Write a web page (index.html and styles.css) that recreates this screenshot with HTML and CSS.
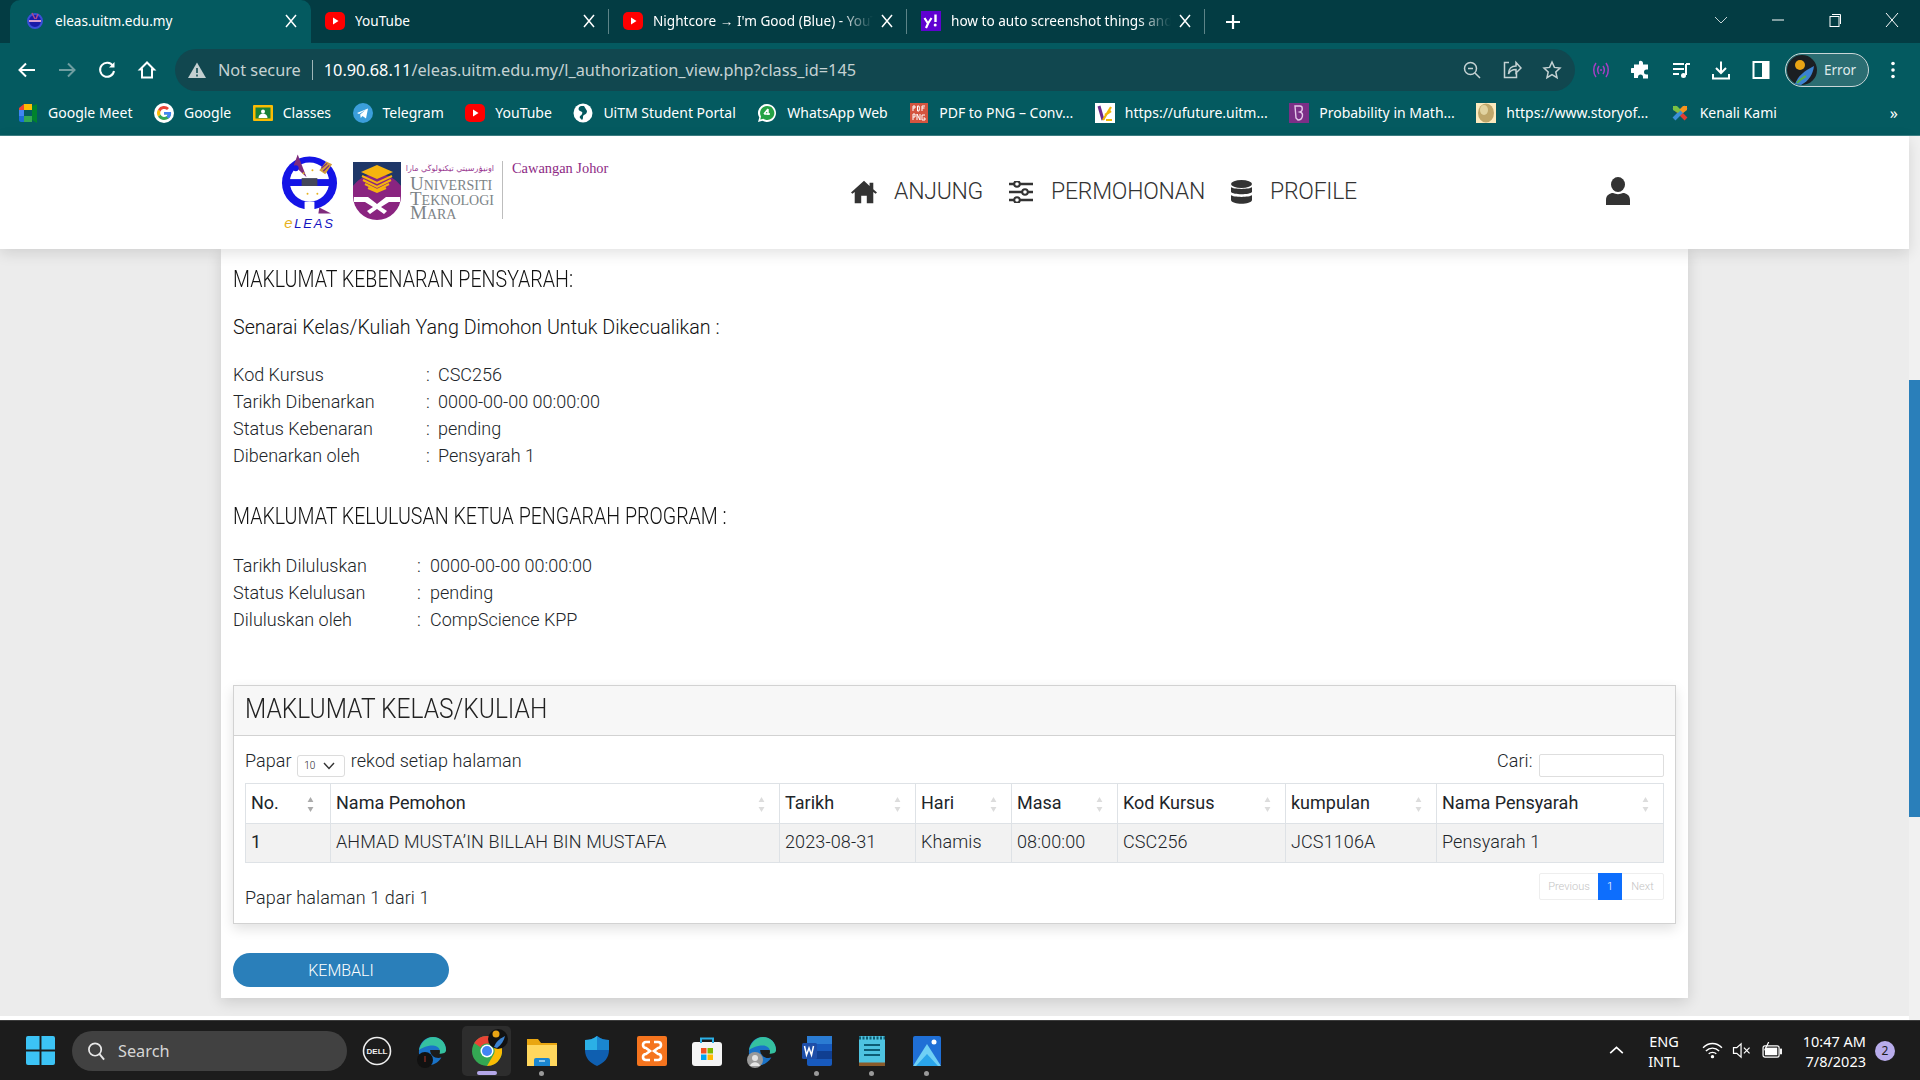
FILE: index.html
```html
<!DOCTYPE html>
<html>
  <head>
    <title>eLEAS - Maklumat Kebenaran</title>
    <link rel="stylesheet" href="styles.css">
  </head>
  <body>
    <svg class="defs" width="0" height="0">
      <symbol id="yt" viewBox="0 0 20 20"><rect y="1" width="20" height="18" rx="5" fill="#f00"/><path d="M8 6.500l5.500 3.500L8 13.500z" fill="#fff"/></symbol>
      <symbol id="x" viewBox="0 0 12 14"><path d="M1 1l10 12M11 1L1 13" stroke="#fff" stroke-width="1.500" fill="none"/></symbol>
      <symbol id="edge" viewBox="0 0 30 32"><path d="M1 17C1 7 8 1 16 1c8 0 14 6 14 14H13c0 6 6 10 12 8-3 5-8 8-12 8C6 31 1 25 1 17z" fill="#1a73c8"/><path d="M1 15C3 7 9 1 16 1c8 0 14 6 14 14 0 3-3 4-7 4 2-5-2-9-7-9-7 0-13 3-15 5z" fill="#35c1a0"/></symbol>
      <symbol id="sortarrows" viewBox="0 0 8 18"><path d="M4 0l3.500 6H.5z" fill="currentColor"/><path d="M4 18L.5 12h7z" fill="currentColor"/></symbol>
    </svg>

    <div id="tabstrip">
      <div class="tab active">
        <svg class="favicon" viewBox="0 0 20 20"><circle cx="10" cy="10" r="7" fill="#1a1aa8" stroke="#3a4fd8" stroke-width="2"/><path d="M4 9h12v2H4z" fill="#d9a0d0"/><path d="M7 2l3 6M13 3l-2 5" stroke="#b04a8a" stroke-width="1.500"/></svg>
        <span class="tabtitle">eleas.uitm.edu.my</span>
        <svg class="tabclose"><use href="#x"/></svg>
      </div>
      <div class="tab">
        <svg class="favicon"><use href="#yt"/></svg>
        <span class="tabtitle">YouTube</span>
        <svg class="tabclose"><use href="#x"/></svg>
      </div>
      <div class="tab">
        <svg class="favicon"><use href="#yt"/></svg>
        <span class="tabtitle fade">Nightcore → I'm Good (Blue) - YouTube</span>
        <svg class="tabclose"><use href="#x"/></svg>
      </div>
      <div class="tab">
        <svg class="favicon" viewBox="0 0 20 20"><rect width="20" height="20" fill="#5f01d1"/><path d="M3.500 7l3.500 5.500L5 17M10.500 7l-3.500 5.500" stroke="#fff" stroke-width="2.200" fill="none"/><path d="M14.500 3.500v7.500" stroke="#fff" stroke-width="2.400"/><circle cx="14.200" cy="14" r="1.500" fill="#fff"/></svg>
        <span class="tabtitle fade">how to auto screenshot things and save</span>
        <svg class="tabclose"><use href="#x"/></svg>
      </div>
      <svg class="newtab" viewBox="0 0 16 16"><path d="M8 1v14M1 8h14" stroke="#fff" stroke-width="2.200"/></svg>
      <div class="winctl">
        <svg class="winbtn" viewBox="0 0 14 14"><path d="M1 4l6 6 6-6" stroke="#c8d4d6" fill="none"/></svg>
        <svg class="winbtn" viewBox="0 0 14 14"><path d="M1 7h12" stroke="#fff"/></svg>
        <svg class="winbtn" viewBox="0 0 14 14"><rect x="2" y="3.500" width="9" height="10" fill="none" stroke="#fff"/><path d="M4 1.500h8.500V11" fill="none" stroke="#fff"/></svg>
        <svg class="winbtn" viewBox="0 0 14 14"><path d="M1 0l12 14M13 0L1 14" stroke="#fff" fill="none"/></svg>
      </div>
    </div>

    <div id="toolbar">
      <div class="tbtn"><svg viewBox="0 0 20 20"><path d="M18 10H3M9 3.500L2.500 10 9 16.500" stroke="#fff" stroke-width="2" fill="none"/></svg></div>
      <div class="tbtn"><svg viewBox="0 0 20 20"><path d="M2 10h15M11 3.500l6.500 6.500-6.500 6.500" stroke="#6f9ea1" stroke-width="2" fill="none"/></svg></div>
      <div class="tbtn"><svg viewBox="0 0 20 20"><path d="M16 6a7 7 0 1 0 1 5" stroke="#fff" stroke-width="2" fill="none"/><path d="M17.500 2v5.500H12z" fill="#fff"/></svg></div>
      <div class="tbtn"><svg viewBox="0 0 20 20"><path d="M10 2.500L3 9.500h2v8h10v-8h2z" stroke="#fff" stroke-width="2" fill="none"/></svg></div>
      <div id="omnibox">
        <svg class="warn" viewBox="0 0 20 20"><path d="M10 2.500L19 18H1z" fill="#c3cfd0"/><path d="M10 8v5M10 14.500v2" stroke="#0f4a52" stroke-width="1.600"/></svg>
        <span class="notsecure">Not secure</span>
        <span class="omnisep"></span>
        <span class="url"><b>10.90.68.11</b>/eleas.uitm.edu.my/l_authorization_view.php?class_id=145</span>
        <div class="omniright">
          <div class="tbtn"><svg viewBox="0 0 20 20"><circle cx="8.500" cy="8.500" r="6" stroke="#c5d2d3" stroke-width="1.500" fill="none"/><path d="M13 13l5 5M6 8.500h5" stroke="#c5d2d3" stroke-width="1.500"/></svg></div>
          <div class="tbtn"><svg viewBox="0 0 20 20"><path d="M7 2.500H2.500v15h12V13" stroke="#c5d2d3" stroke-width="1.500" fill="none"/><path d="M6.500 14c0-5 3-8 7.500-8V2.500L19 8l-5 5V9.500c-3 0-6 1-7.500 4.500z" stroke="#c5d2d3" stroke-width="1.500" fill="none"/></svg></div>
          <div class="tbtn"><svg viewBox="0 0 20 20"><path d="M10 2l2.400 5.400 5.600.6-4.200 3.900 1.200 5.800-5-3-5 3 1.200-5.800L2 8l5.600-.6z" stroke="#c5d2d3" stroke-width="1.500" fill="none"/></svg></div>
        </div>
      </div>
      <div class="tbtn"><svg viewBox="0 0 20 20"><path d="M5 3c-3 4-3 10 0 14M15 3c3 4 3 10 0 14" stroke="#a63fc4" stroke-width="1.500" fill="none"/><path d="M8 6c-2 3-2 5 0 8M12 6c2 3 2 5 0 8" stroke="#a63fc4" stroke-width="1.500" fill="none"/><circle cx="10" cy="10" r="1" fill="#a63fc4"/></svg></div>
      <div class="tbtn"><svg viewBox="0 0 20 20"><path d="M8 1.500a2.300 2.300 0 0 1 4 1.500v1.500h5v5h-1.500a2.500 2.500 0 0 0 0 5H17v4h-5v-1.500a2.500 2.500 0 0 0-5 0V18H3v-5H1.500a2.500 2.500 0 0 1 0-5H3V4.500h5z" fill="#fff"/></svg></div>
      <div class="tbtn"><svg viewBox="0 0 20 20"><path d="M2 4h11M2 9h11M2 14h6" stroke="#fff" stroke-width="2" fill="none"/><path d="M15 4v11" stroke="#fff" stroke-width="2"/><path d="M15 4h4" stroke="#fff" stroke-width="2"/><circle cx="12.500" cy="15.500" r="2.500" fill="#fff"/></svg></div>
      <div class="tbtn"><svg viewBox="0 0 20 20"><path d="M10 1.500v11M5 8l5 5 5-5" stroke="#fff" stroke-width="2" fill="none"/><path d="M2 14v4.500h16V14" stroke="#fff" stroke-width="2" fill="none"/></svg></div>
      <div class="tbtn"><svg viewBox="0 0 20 20"><rect x="2.500" y="2" width="15" height="16" fill="none" stroke="#fff" stroke-width="2"/><rect x="11" y="2" width="6.500" height="16" fill="#fff"/></svg></div>
      <div id="profile">
        <svg viewBox="0 0 30 30"><circle cx="15" cy="15" r="15" fill="#1b1e22"/><circle cx="13" cy="10" r="5" fill="#e9a414"/><path d="M8 29c3-8 9-13 19-18-1 8-5 15-13 19z" fill="#3b82d0"/><path d="M10 28c3-3 5-5 9-7" stroke="#55b04a" stroke-width="2"/></svg>
        <span>Error</span>
      </div>
      <div class="tbtn dots"><svg viewBox="0 0 20 20"><circle cx="10" cy="3.500" r="1.800" fill="#fff"/><circle cx="10" cy="10" r="1.800" fill="#fff"/><circle cx="10" cy="16.500" r="1.800" fill="#fff"/></svg></div>
    </div>

    <div id="bookmarks">
      <div class="bm"><svg viewBox="0 0 20 20"><path d="M1 5l5-4v6H1z" fill="#ea4335"/><path d="M1 7h5v6H1z" fill="#4285f4"/><path d="M1 13h5v6H3c-1 0-2-1-2-2z" fill="#1a6dd8"/><path d="M6 1h8v6H6z" fill="#fbbc04"/><path d="M6 13h8v6H6z" fill="#34a853"/><path d="M14 3v14l5 3V1z" fill="#00832d"/></svg>Google Meet</div>
      <div class="bm"><svg viewBox="0 0 20 20"><circle cx="10" cy="10" r="10" fill="#fff"/><path d="M10 9h7c.6 4-2 8-7 8a7 7 0 0 1-6-3.500l2.500-2C7.200 13 8.500 14 10 14c2 0 3.400-1 3.800-2.500H10z" fill="#34a853"/><path d="M17 9h-7v2.500h3.800c-.2 1-.8 1.600-1.600 2l2.500 2C16.400 14 17.500 11.500 17 9z" fill="#4285f4"/><path d="M4 6.500A7 7 0 0 0 4 13.500l2.500-2a4 4 0 0 1 0-3z" fill="#fbbc04"/><path d="M4 6.500A7 7 0 0 1 15 5l-2 2a4 4 0 0 0-6.500 1.500z" fill="#ea4335"/></svg>Google</div>
      <div class="bm"><svg viewBox="0 0 20 20"><rect y="2" width="20" height="16" rx="1" fill="#fbbc04"/><rect x="2.500" y="4.500" width="15" height="11" fill="#188038"/><circle cx="10" cy="8.500" r="2" fill="#fff"/><path d="M5.500 15c0-6 9-6 9 0z" fill="#fff"/></svg>Classes</div>
      <div class="bm"><svg viewBox="0 0 20 20"><circle cx="10" cy="10" r="10" fill="#3b9edb"/><path d="M4 10l11-4.500-2 10-3.500-2.500-1.800 2-.5-3.500 5.300-4.500-6.500 4z" fill="#fff"/></svg>Telegram</div>
      <div class="bm"><svg><use href="#yt"/></svg>YouTube</div>
      <div class="bm"><svg viewBox="0 0 20 20"><circle cx="10" cy="10" r="9.500" fill="#fff"/><path d="M8 3c-3 1-3 4-1 5s3 1 2 3-3 2-2 4l2 2c2-2 0-4 2-5s3-2 3-4l-3-5z" fill="#04585e"/></svg>UiTM Student Portal</div>
      <div class="bm"><svg viewBox="0 0 20 20"><path d="M10 1a9 9 0 0 0-7.700 13.600L1 19l4.500-1.200A9 9 0 1 0 10 1z" fill="#fff"/><path d="M10 3a7 7 0 0 0-6 10.500L3.300 16.500l3-.8A7 7 0 1 0 10 3z" fill="#25a244"/><path d="M11 6v6M7 11h6M11 6l-4 5" stroke="#fff" stroke-width="1.500" fill="none"/></svg>WhatsApp Web</div>
      <div class="bm"><svg viewBox="0 0 20 20"><rect x="1" width="18" height="20" fill="#d4543f"/><path d="M4 3v5M4 3h2v2H4M8.500 3v5h1.500l.5-2.500L10 3zM13 8V3h3M13 5h2.500M4 11v6M4 11h2v3H4M8 17v-6l3 6v-6M16 12h-3v5h3v-2h-1.500" stroke="#fff" stroke-width="1" fill="none"/></svg>PDF to PNG – Conv...</div>
      <div class="bm"><svg viewBox="0 0 20 20"><rect width="20" height="20" fill="#fff"/><path d="M4 3l4 14" stroke="#6b2a8c" stroke-width="3"/><path d="M8 17l8-13M11 17h6M10 12l6-4" stroke="#f2b705" stroke-width="2.200"/></svg>https://ufuture.uitm...</div>
      <div class="bm"><svg viewBox="0 0 20 20"><rect width="20" height="20" fill="#7b2f87"/><path d="M6 3h5c3 0 3 5 0 6 4 1 3 8-2 8l-2-2z" fill="none" stroke="#e6c8ea" stroke-width="1.400"/></svg>Probability in Math...</div>
      <div class="bm"><svg viewBox="0 0 20 20"><rect width="20" height="20" fill="#fbe9bd"/><ellipse cx="10" cy="10" rx="8" ry="9.500" fill="#bfa76a"/><ellipse cx="8" cy="7" rx="4" ry="5" fill="#e1d3a0"/></svg>https://www.storyof...</div>
      <div class="bm"><svg viewBox="0 0 20 20"><path d="M4 4l12 12" stroke="#e23c32" stroke-width="4"/><path d="M16 4L4 16" stroke="#3a8fd8" stroke-width="4"/><path d="M3 7V3h4l4 4-3 3z" fill="#7ac143"/><path d="M17 7V3h-4L9.500 6.500 13 10z" fill="#f7941d"/></svg>Kenali Kami</div>
      <span class="more">»</span>
    </div>

    <div id="page">
      <div id="viewport">
        <div id="siteHeader">
          <div class="brand">
            <div class="eleas">
              <svg viewBox="0 0 60 62" width="59" height="62">
                <path d="M40 54l12 6H39z" fill="#7f2b7c"/>
                <ellipse cx="30" cy="29" rx="28" ry="27" fill="#1414e6"/>
                <ellipse cx="30" cy="28" rx="20" ry="20" fill="#fff"/>
                <rect x="6" y="25" width="48" height="7" fill="#1414e6"/>
                <rect x="22" y="24" width="16" height="8" fill="#44475a"/>
                <rect x="25" y="48" width="10" height="9" fill="#fff"/>
                <path d="M18 0l9 23-13-12z" fill="#7f2b7c"/>
                <circle cx="16" cy="14" r="3" fill="#1414e6"/>
                <path d="M40 16l7-9 6 3-7 10z" fill="#d6a13a"/>
                <path d="M42 14l6-5M44 17l6-6" stroke="#7f2b7c" stroke-width="1.200"/>
                <circle cx="24" cy="19" r="1" fill="#e6b220"/><circle cx="33" cy="16" r="1" fill="#e6b220"/><circle cx="38" cy="40" r="1" fill="#e6b220"/><circle cx="28" cy="40" r="1" fill="#e6b220"/>
              </svg>
              <span class="eleasName"><i>e</i>LEAS</span>
            </div>
            <svg class="uitmShield" viewBox="0 0 48 59" width="48" height="59">
              <path d="M0 34a24 24 0 0 0 48 0V24a24 24 0 0 0-48 0z" fill="#8a2480"/>
              <path d="M0 0h48v24C42 16 34 12 24 12S6 16 0 24z" fill="#1f3768"/>
              <path d="M24 3l16 7-16 7-16-7z" fill="#f6b40e"/>
              <path d="M9 14l15 7 15-7M10 18l14 7 14-7M12 22l12 6 12-6M15 26l9 4 9-4" stroke="#f6b40e" stroke-width="2" fill="none"/>
              <path d="M1 35h14l9 7 9-7h14v5H36l-8 5 6 4-3 3-7-5-7 5-3-3 6-4-8-5H1z" fill="#fff"/>
            </svg>
            <div class="uitmName">
              <span class="jawi" lang="ar" dir="rtl">اونيۏرسيتي تيكنولوڬي مارا</span>
              <span class="uitmLine">Universiti</span>
              <span class="uitmLine">Teknologi</span>
              <span class="uitmLine">Mara</span>
            </div>
            <span class="branch">Cawangan Johor</span>
          </div>
          <nav class="mainnav">
            <a class="navlink"><svg viewBox="0 0 28 24" width="26" height="24"><path d="M14 0L0 12.500l1.500 1.500L4 12v12h7v-8h6v8h7V12l2.500 2 1.500-1.500L24 9V2h-4v3.500z" fill="#333"/></svg>ANJUNG</a>
            <a class="navlink"><svg viewBox="0 0 24 22" width="24" height="22"><path d="M0 3h24M0 11h24M0 19h24" stroke="#333" stroke-width="2.600"/><circle cx="8" cy="3" r="2.800" fill="#fff" stroke="#333" stroke-width="2"/><circle cx="16" cy="11" r="2.800" fill="#fff" stroke="#333" stroke-width="2"/><circle cx="8" cy="19" r="2.800" fill="#fff" stroke="#333" stroke-width="2"/></svg>PERMOHONAN</a>
            <a class="navlink"><svg viewBox="0 0 21 24" width="21" height="24"><ellipse cx="10.500" cy="4" rx="10.500" ry="4" fill="#333"/><path d="M0 7c2 2.500 19 2.500 21 0v5c-2 3-19 3-21 0zM0 15c2 2.500 19 2.500 21 0v5c-1 5-20 5-21 0z" fill="#333"/></svg>PROFILE</a>
          </nav>
          <svg class="usericon" viewBox="0 0 24 28" width="24" height="28"><ellipse cx="12" cy="7.500" rx="7" ry="7.500" fill="#333"/><path d="M0 28v-5c0-5 4-7 7-7 3 1.500 7 1.500 10 0 3 0 7 2 7 7v5z" fill="#333"/></svg>
        </div>

        <div class="card">
          <h3 class="secTitle first">MAKLUMAT KEBENARAN PENSYARAH:</h3>
          <p class="lead">Senarai Kelas/Kuliah Yang Dimohon Untuk Dikecualikan :</p>
          <div class="kv kvOne">
            <span>Kod Kursus</span><span>:</span><span>CSC256</span>
            <span>Tarikh Dibenarkan</span><span>:</span><span>0000-00-00 00:00:00</span>
            <span>Status Kebenaran</span><span>:</span><span>pending</span>
            <span>Dibenarkan oleh</span><span>:</span><span>Pensyarah 1</span>
          </div>
          <h3 class="secTitle second">MAKLUMAT KELULUSAN KETUA PENGARAH PROGRAM :</h3>
          <div class="kv kvTwo">
            <span>Tarikh Diluluskan</span><span>:</span><span>0000-00-00 00:00:00</span>
            <span>Status Kelulusan</span><span>:</span><span>pending</span>
            <span>Diluluskan oleh</span><span>:</span><span>CompScience KPP</span>
          </div>

          <div class="panel">
            <div class="panelHead"><span>MAKLUMAT KELAS/KULIAH</span></div>
            <div class="panelBody">
              <div class="dtTop">
                <div class="dtLength">Papar <span class="lenSelect">10<svg viewBox="0 0 12 8" width="12" height="8"><path d="M1 1l5 5.500L11 1" stroke="#333" stroke-width="1.400" fill="none"/></svg></span> rekod setiap halaman</div>
                <label class="dtSearch">Cari: <input type="text"></label>
              </div>
              <table class="dtTable">
                <colgroup>
                  <col class="c1"><col class="c2"><col class="c3"><col class="c4"><col class="c5"><col class="c6"><col class="c7"><col class="c8">
                </colgroup>
                <thead>
                  <tr>
                    <th class="sortAsc">No.<svg class="sort"><use href="#sortarrows"/></svg></th>
                    <th>Nama Pemohon<svg class="sort"><use href="#sortarrows"/></svg></th>
                    <th>Tarikh<svg class="sort"><use href="#sortarrows"/></svg></th>
                    <th>Hari<svg class="sort"><use href="#sortarrows"/></svg></th>
                    <th>Masa<svg class="sort"><use href="#sortarrows"/></svg></th>
                    <th>Kod Kursus<svg class="sort"><use href="#sortarrows"/></svg></th>
                    <th>kumpulan<svg class="sort"><use href="#sortarrows"/></svg></th>
                    <th>Nama Pensyarah<svg class="sort"><use href="#sortarrows"/></svg></th>
                  </tr>
                </thead>
                <tbody>
                  <tr>
                    <td class="num">1</td>
                    <td>AHMAD MUSTA’IN BILLAH BIN MUSTAFA</td>
                    <td>2023-08-31</td>
                    <td>Khamis</td>
                    <td>08:00:00</td>
                    <td>CSC256</td>
                    <td>JCS1106A</td>
                    <td>Pensyarah 1</td>
                  </tr>
                </tbody>
              </table>
              <div class="dtFoot">
                <div class="dtInfo">Papar halaman 1 dari 1</div>
                <div class="pager"><span class="prev">Previous</span><span class="current">1</span><span class="next">Next</span></div>
              </div>
            </div>
          </div>

          <button class="backBtn">KEMBALI</button>
        </div>
        <div class="pageFoot"></div>
      </div>
      <div id="scrollbar"><div class="thumb"></div></div>
    </div>

    <div id="taskbar">
      <svg class="winlogo" viewBox="0 0 30 30"><path d="M0 2a2 2 0 0 1 2-2h12v14H0zM16 0h12a2 2 0 0 1 2 2v12H16zM0 16h14v14H2a2 2 0 0 1-2-2zM16 16h14v12a2 2 0 0 1-2 2H16z" fill="#3cc3f5"/></svg>
      <div class="searchbox"><svg viewBox="0 0 20 20" width="19" height="20"><circle cx="8.500" cy="8.500" r="6.500" stroke="#e8e8e8" stroke-width="1.800" fill="none"/><path d="M13 13l5 6" stroke="#e8e8e8" stroke-width="2"/></svg>Search</div>
      <div class="app"><svg viewBox="0 0 30 30"><circle cx="15" cy="15" r="13.500" fill="none" stroke="#eee" stroke-width="1.600"/><text x="15" y="18" class="dellText">DELL</text></svg></div>
      <div class="app"><svg><use href="#edge"/></svg><svg class="overlay" viewBox="0 0 16 16"><circle cx="8" cy="8" r="8" fill="#111"/><path d="M8 4v6" stroke="#7a2a20" stroke-width="1.500"/></svg></div>
      <div class="app active">
        <svg viewBox="0 0 30 30"><circle cx="15" cy="15" r="15" fill="#34a853"/><path d="M15 0a15 15 0 0 1 13 7.500H15a7.500 7.500 0 0 0-6.500 3.700L2.200 7A15 15 0 0 1 15 0z" fill="#ea4335"/><path d="M28 7.500A15 15 0 0 1 15 30l6.500-11.200A7.500 7.500 0 0 0 15 7.500z" fill="#fbbc04"/><circle cx="15" cy="15" r="6.500" fill="#fff"/><circle cx="15" cy="15" r="5" fill="#4285f4"/></svg>
        <svg class="overlay profileBadge" viewBox="0 0 20 24"><circle cx="10" cy="12" r="10" fill="#111"/><circle cx="8" cy="7" r="3.500" fill="#e9a414"/><path d="M6 20c2-5 5-8 11-11-1 5-4 9-8 12z" fill="#3b82d0"/></svg>
        <span class="pill"></span>
      </div>
      <div class="app"><svg viewBox="0 0 30 30"><path d="M0 3h11l3 4h16v23H0z" fill="#e9a611"/><path d="M0 9h30v21H0z" fill="#ffd75e"/><path d="M9 22h12a2 2 0 0 1 2 2v6H7v-6a2 2 0 0 1 2-2z" fill="#1a86d0"/><path d="M12 25h6" stroke="#bfe3f7" stroke-width="1.400"/></svg><span class="dot"></span></div>
      <div class="app"><svg viewBox="0 0 30 30"><path d="M15 0C11 3 7 4 3 4v10c0 8 5 13 12 16 7-3 12-8 12-16V4c-4 0-8-1-12-4z" fill="#0f5fb0"/><path d="M15 0C11 3 7 4 3 4v10h12z" fill="#2bb0e6"/><path d="M15 0c4 3 8 4 12 4v10H15z" fill="#1a86d0"/></svg></div>
      <div class="app"><svg viewBox="0 0 30 30"><rect width="30" height="30" rx="2" fill="#f5741e"/><path d="M13 6H9C5 6 5 12 9 12l4 3-4 3c-4 0-4 6 0 6h4M17 6h4c4 0 4 6 0 6l-4 3 4 3c4 0 4 6 0 6h-4" fill="none" stroke="#fff" stroke-width="2.600"/></svg></div>
      <div class="app"><svg viewBox="0 0 30 30"><rect y="6" width="30" height="24" rx="3" fill="#f4f4f4"/><path d="M9 7V2.500h12V7" stroke="#2bb0e6" stroke-width="2" fill="none"/><rect x="9" y="12" width="5.500" height="5.500" fill="#f25022"/><rect x="15.500" y="12" width="5.500" height="5.500" fill="#7fba00"/><rect x="9" y="18.500" width="5.500" height="5.500" fill="#00a4ef"/><rect x="15.500" y="18.500" width="5.500" height="5.500" fill="#ffb900"/></svg></div>
      <div class="app"><svg><use href="#edge"/></svg><svg class="overlay" viewBox="0 0 16 16"><circle cx="8" cy="8" r="8" fill="#9a9a9a"/><circle cx="8" cy="6" r="3" fill="#e4e4e4"/><path d="M3 14c1-5 9-5 10 0z" fill="#e4e4e4"/></svg></div>
      <div class="app"><svg viewBox="0 0 30 30"><rect x="5" width="25" height="30" rx="2" fill="#185abd"/><rect x="5" y="0" width="25" height="8" fill="#2b7cd3"/><rect x="5" y="15" width="25" height="8" fill="#103f91"/><rect y="7" width="15" height="16" rx="1.500" fill="#1e4ea8"/><path d="M2.500 10l2 9 2.500-7 2.500 7 2-9" stroke="#fff" stroke-width="1.500" fill="none"/></svg><span class="dot"></span></div>
      <div class="app"><svg viewBox="0 0 26 30"><rect width="26" height="30" rx="1" fill="#4ec3e0"/><rect y="26.500" width="26" height="3.500" fill="#8a5a2a"/><path d="M0 2h26" stroke="#0d5c73" stroke-width="3" stroke-dasharray="2 1.500"/><path d="M5 9h16M5 14h16M5 19h16" stroke="#0d5c73" stroke-width="2"/></svg><span class="dot"></span></div>
      <div class="app"><svg viewBox="0 0 28 30"><rect width="28" height="30" rx="2" fill="#1f6fd6"/><path d="M0 30L14 8l14 22z" fill="#6fd0f5"/><path d="M3 30l11-12 11 12z" fill="#2aa5ea"/><circle cx="21" cy="6" r="2.500" fill="#fff"/></svg><span class="dot"></span></div>

      <div class="tray">
        <svg class="chevUp" viewBox="0 0 16 10" width="15" height="9"><path d="M1 8l7-6.500L15 8" stroke="#fff" stroke-width="1.800" fill="none"/></svg>
        <div class="lang">ENG<br>INTL</div>
        <svg class="tray1" viewBox="0 0 22 18" width="21" height="17"><path d="M1 6c6-6 14-6 20 0M4 9.500c4-4 10-4 14 0M7 12.500c2-2 6-2 8 0" stroke="#fff" stroke-width="1.500" fill="none"/><circle cx="11" cy="15.500" r="1.800" fill="#fff"/></svg>
        <svg class="tray2" viewBox="0 0 20 18" width="20" height="17"><path d="M1 6h3.500L9 2v14l-4.500-4H1z" stroke="#fff" stroke-width="1.300" fill="none"/><path d="M12 6l6 6M18 6l-6 6" stroke="#fff" stroke-width="1.300"/></svg>
        <svg class="tray3" viewBox="0 0 22 18" width="21" height="17"><rect x="1" y="4" width="17" height="12" rx="2" stroke="#fff" stroke-width="1.300" fill="none"/><rect x="3" y="6" width="13" height="8" fill="#fff"/><rect x="19" y="7" width="2" height="6" fill="#fff"/><path d="M7 0L3 8h4l-1 5" stroke="#fff" stroke-width="1.300" fill="none"/></svg>
        <div class="clock">10:47 AM<br>7/8/2023</div>
        <span class="notif">2</span>
      </div>
    </div>
  </body>
</html>
```

FILE: styles.css
```css
/* Browser frame, page and taskbar stack in one column */
html, body {
  margin: 0;
  padding: 0;
  height: 100%;
  overflow: hidden;
}

body {
  width: 1920px;
  height: 1080px;
  display: flex;
  flex-direction: column;
  font-family: Roboto, sans-serif;
  font-weight: 300;
  color: #212529;
}

.defs {
  position: absolute;
}

/* Tabs */
#tabstrip {
  height: 43px;
  flex: none;
  display: flex;
  align-items: stretch;
  padding-left: 10px;
  background: #033c43;
  font-family: "Noto Sans", sans-serif;
  font-weight: 400;
  font-size: 13.6px;
  color: #fff;
}

.tab {
  width: 298px;
  box-sizing: border-box;
  display: flex;
  align-items: center;
  padding: 0 14px 2px;
  position: relative;
  margin: 0;
}

.tab.active {
  width: 301px;
  padding-left: 15px;
  background: #045a60;
  border-radius: 10px 10px 0 0;
}

.tab:not(.active)::after {
  content: "";
  position: absolute;
  right: 0;
  top: 9px;
  bottom: 9px;
  width: 1px;
  background: #5d8488;
}

.favicon {
  width: 20px;
  height: 20px;
  flex: none;
  margin-right: 10px;
}

.tabtitle {
  flex: 1;
  white-space: nowrap;
  overflow: hidden;
}

.tabtitle.fade {
  -webkit-mask-image: linear-gradient(to right, #000 85%, transparent);
  mask-image: linear-gradient(to right, #000 85%, transparent);
}

.tabclose {
  width: 12px;
  height: 14px;
  flex: none;
  margin-left: 8px;
}

.newtab {
  width: 16px;
  height: 16px;
  align-self: center;
  margin-left: 20px;
}

.winctl {
  margin-left: auto;
  display: flex;
  align-items: center;
  gap: 38px;
  padding-right: 21px;
}

.winbtn {
  width: 14px;
  height: 14px;
  margin-left: 5px;
  margin-bottom: 4px;
}

/* Address row */
#toolbar {
  height: 49px;
  flex: none;
  box-sizing: border-box;
  display: flex;
  align-items: center;
  padding: 5px 3px 0 7px;
  background: #045a60;
}

.tbtn {
  width: 40px;
  height: 40px;
  flex: none;
  display: flex;
  align-items: center;
  justify-content: center;
}

.tbtn svg {
  width: 20px;
  height: 20px;
}

#omnibox {
  flex: 1;
  height: 42px;
  margin: 0 6px 0 8px;
  padding-left: 12px;
  display: flex;
  align-items: center;
  background: #11474f;
  border-radius: 21px;
  font-family: "Noto Sans", sans-serif;
  font-weight: 400;
  font-size: 16.3px;
  color: #c5d2d3;
}

.warn {
  width: 20px;
  height: 20px;
  margin-right: 11px;
}

.omnisep {
  width: 1px;
  height: 20px;
  margin: 0 11px;
  background: #9fb6b8;
}

.url b {
  font-weight: 400;
  color: #fff;
}

.omniright {
  margin-left: auto;
  display: flex;
  padding-right: 3px;
}

#profile {
  width: 84px;
  height: 34px;
  box-sizing: border-box;
  margin-left: 4px;
  display: flex;
  align-items: center;
  gap: 7px;
  padding-left: 1px;
  flex: none;
  background: #2b6d72;
  border: 1px solid #c9d6d7;
  border-radius: 17px;
  font-family: "Noto Sans", sans-serif;
  font-weight: 400;
  font-size: 13.5px;
  color: #dfe9ea;
}

#profile svg {
  width: 30px;
  height: 30px;
}

.tbtn.dots {
  width: 48px;
}

/* Bookmarks */
#bookmarks {
  height: 44px;
  flex: none;
  display: flex;
  align-items: center;
  box-sizing: border-box;
  padding: 0 0 2px 18px;
  gap: 21.5px;
  background: #045a60;
  border-bottom: 1px solid #3d8085;
  font-family: "Noto Sans", sans-serif;
  font-weight: 400;
  font-size: 14px;
  color: #fff;
}

.bm {
  display: flex;
  align-items: center;
  gap: 10px;
  white-space: nowrap;
}

.bm svg {
  width: 20px;
  height: 20px;
}

.more {
  margin-left: auto;
  margin-right: 22px;
  font-size: 16px;
}

/* Page */
#page {
  flex: 1;
  min-height: 0;
  display: flex;
}

#viewport {
  flex: 1;
  display: flex;
  flex-direction: column;
  background: #ececec;
}

#scrollbar {
  width: 11px;
  flex: none;
  background: #f1f1f1;
  padding-top: 244px;
  box-sizing: border-box;
}

.thumb {
  height: 437px;
  background: #2a7fba;
}

#siteHeader {
  height: 113px;
  flex: none;
  box-sizing: border-box;
  position: relative;
  z-index: 2;
  display: flex;
  align-items: center;
  padding: 0 0 2px 280px;
  background: #fff;
  box-shadow: 0 4px 14px rgba(0, 0, 0, 0.12);
}

.brand {
  display: flex;
  align-items: flex-start;
  width: 571px;
  flex: none;
  padding-top: 2px;
}

.eleas {
  width: 59px;
  flex: none;
  display: flex;
  flex-direction: column;
  align-items: center;
}

.eleasName {
  margin-top: 0;
  font-family: "Liberation Sans", sans-serif;
  font-style: italic;
  font-weight: 400;
  font-size: 13px;
  line-height: 14px;
  letter-spacing: 1.8px;
  color: #1414c0;
}

.eleasName i {
  color: #e6b220;
  font-size: 15px;
}

.uitmShield {
  flex: none;
  margin: 8px 0 0 14px;
}

.uitmName {
  width: 84px;
  height: 58px;
  flex: none;
  margin: 7px 0 0 9px;
  padding-right: 8px;
  border-right: 1px solid #bdbdbd;
  display: flex;
  flex-direction: column;
  font-family: "Liberation Serif", serif;
  font-weight: 400;
}

.jawi {
  font-family: "DejaVu Sans", sans-serif;
  font-size: 8px;
  line-height: 16px;
  margin-bottom: 2px;
  color: #9b3a92;
  white-space: nowrap;
  text-align: center;
}

.uitmLine {
  font-size: 14px;
  line-height: 14.5px;
  text-transform: uppercase;
  color: #7d8487;
  white-space: nowrap;
}

.uitmLine::first-letter {
  font-size: 19px;
  line-height: 1px;
}

.branch {
  margin: 6px 0 0 9px;
  font-family: "Liberation Serif", serif;
  font-weight: 400;
  font-size: 14.4px;
  line-height: 16px;
  color: #8e2a85;
  white-space: nowrap;
}

.mainnav {
  display: flex;
  gap: 26px;
}

.navlink {
  display: flex;
  align-items: center;
  gap: 18px;
  font-size: 23px;
  letter-spacing: -0.25px;
  color: #333;
}

.navlink:first-child {
  gap: 17px;
}

.usericon {
  margin: 0 0 2px 249px;
}

.card {
  width: 1467px;
  height: 749px;
  flex: none;
  box-sizing: border-box;
  margin-left: 221px;
  padding: 0 12px;
  background: #fff;
  box-shadow: 0 4px 14px rgba(0, 0, 0, 0.14);
}

.secTitle {
  margin: 0;
  font-size: 23px;
  font-weight: 300;
  line-height: 30px;
  color: #111;
  transform: scaleX(0.853);
  transform-origin: left center;
}

.secTitle.first {
  padding-top: 16px;
}

.secTitle.second {
  margin-top: 33px;
}

.lead {
  margin: 19px 0 0;
  font-size: 19.7px;
  line-height: 28px;
  color: #111;
}

.kv {
  display: grid;
  font-size: 18px;
  line-height: 27px;
}

.kvOne {
  grid-template-columns: 193px 12px auto;
  margin-top: 19px;
}

.kvTwo {
  grid-template-columns: 184px 13px auto;
  margin-top: 20px;
}

.panel {
  margin-top: 52px;
  height: 239px;
  box-sizing: border-box;
  border: 1px solid #d2d2d2;
  box-shadow: 0 5px 12px rgba(0, 0, 0, 0.12);
}

.panelHead {
  height: 50px;
  box-sizing: border-box;
  padding-left: 11px;
  background: #f7f7f7;
  border-bottom: 1px solid #d2d2d2;
  font-size: 28px;
  line-height: 45px;
  color: #222;
}

.panelHead span {
  display: inline-block;
  transform: scaleX(0.876);
  transform-origin: left center;
}

.panelBody {
  padding: 0 11px;
}

.dtTop {
  height: 47px;
  box-sizing: border-box;
  padding-top: 1px;
  display: flex;
  justify-content: space-between;
  font-size: 18px;
  line-height: 47px;
  letter-spacing: 0.08px;
}

.lenSelect {
  display: inline-flex;
  align-items: center;
  gap: 8px;
  width: 48px;
  height: 22px;
  box-sizing: border-box;
  padding-left: 6px;
  border: 1px solid #dcdcdc;
  border-radius: 3px;
  font-size: 10px;
  line-height: 20px;
  vertical-align: -2px;
  margin: 0 1px;
}

.dtSearch input {
  width: 125px;
  height: 23px;
  box-sizing: border-box;
  padding: 0;
  margin-left: 2px;
  border: 1px solid #dedede;
  border-radius: 2px;
  vertical-align: -3px;
}

.dtTable {
  width: 100%;
  table-layout: fixed;
  border-collapse: collapse;
  font-size: 18px;
  text-align: left;
}

.c1 { width: 85px; }
.c2 { width: 449px; }
.c3 { width: 136px; }
.c4 { width: 96px; }
.c5 { width: 106px; }
.c6 { width: 168px; }
.c7 { width: 151px; }

.dtTable th,
.dtTable td {
  box-sizing: border-box;
  border: 1px solid #dee2e6;
  padding: 0 5px 2px;
  white-space: nowrap;
}

.dtTable th {
  height: 40px;
  position: relative;
  font-weight: 400;
  color: #212529;
}

.dtTable td {
  height: 39px;
  padding-bottom: 4px;
  background: #f2f2f2;
  letter-spacing: 0.12px;
}

.dtTable td.num {
  font-weight: 400;
}

.sort {
  position: absolute;
  right: 14px;
  top: 13px;
  width: 7px;
  height: 15px;
  color: #dcdcdc;
}

.sortAsc .sort {
  right: 16px;
  color: #aaa;
}

.dtFoot {
  display: flex;
  justify-content: space-between;
  padding-top: 10px;
}

.dtInfo {
  margin-top: 11px;
  font-size: 18px;
  line-height: 27px;
  letter-spacing: 0.1px;
}

.pager {
  display: flex;
  height: 27px;
  box-sizing: border-box;
  border: 1px solid #eee;
  border-radius: 2px;
  font-size: 11px;
  line-height: 25px;
  color: #c4c4c4;
  text-align: center;
}

.pager .prev {
  width: 58px;
}

.pager .next {
  width: 41px;
}

.pager .current {
  margin: -1px 0;
  width: 24px;
  line-height: 27px;
  background: #0d6efd;
  color: #fff;
}

.backBtn {
  display: block;
  width: 216px;
  height: 34px;
  margin-top: 29px;
  padding: 0;
  border: 0;
  border-radius: 17px;
  background: #2a7fba;
  font-family: Roboto, sans-serif;
  font-weight: 300;
  font-size: 16px;
  color: #fff;
}

.pageFoot {
  height: 4px;
  margin-top: auto;
  background: #fff;
}

/* Windows taskbar */
#taskbar {
  height: 60px;
  flex: none;
  box-sizing: border-box;
  display: flex;
  align-items: center;
  background: #1c1c1c;
  border-top: 1px solid #3c3c3c;
  font-family: "Noto Sans", sans-serif;
  font-weight: 400;
  color: #fff;
}

.winlogo {
  width: 29px;
  height: 29px;
  flex: none;
  margin-left: 26px;
}

.searchbox {
  width: 275px;
  height: 40px;
  flex: none;
  box-sizing: border-box;
  margin-left: 17px;
  margin-right: 2px;
  padding-left: 15px;
  display: flex;
  align-items: center;
  gap: 12px;
  background: #414141;
  border-radius: 20px;
  font-size: 16.3px;
  color: #d6d6d6;
}

.app {
  width: 55px;
  height: 50px;
  flex: none;
  position: relative;
  display: flex;
  align-items: center;
  justify-content: center;
}

.app > svg:first-child {
  width: 30px;
  height: 30px;
}

.dellText {
  font-family: "Liberation Sans", sans-serif;
  font-weight: 700;
  font-size: 8px;
  text-anchor: middle;
  fill: #eee;
}

.app.active {
  background: #2d2d2d;
  border-radius: 5px;
  width: 49px;
  margin: 0 3px;
}

.overlay {
  position: absolute;
  left: 13px;
  bottom: 8px;
  width: 16px;
  height: 16px;
}

.profileBadge {
  left: 26px;
  bottom: 25px;
  width: 20px;
  height: 24px;
}

.pill {
  position: absolute;
  left: 15px;
  bottom: 1px;
  width: 20px;
  height: 4px;
  border-radius: 2px;
  background: #b4a7e8;
}

.dot {
  position: absolute;
  left: 25px;
  bottom: 0;
  width: 5px;
  height: 5px;
  border-radius: 50%;
  background: #9a9a9a;
}

.tray {
  margin-left: auto;
  display: flex;
  align-items: center;
  padding-right: 25px;
}

.lang {
  width: 60px;
  margin-left: 10px;
  text-align: center;
  font-size: 14.5px;
  line-height: 20px;
}

.tray1 { margin-left: 8px; }
.tray2 { margin-left: 9px; }
.tray3 { margin-left: 10px; }

.clock {
  width: 80px;
  margin-left: 3px;
  text-align: right;
  font-size: 14.5px;
  line-height: 20px;
}

.notif {
  width: 20px;
  height: 20px;
  margin-left: 9px;
  border-radius: 50%;
  background: #b8aceb;
  color: #1c1c1c;
  font-size: 12px;
  line-height: 20px;
  text-align: center;
}
```
